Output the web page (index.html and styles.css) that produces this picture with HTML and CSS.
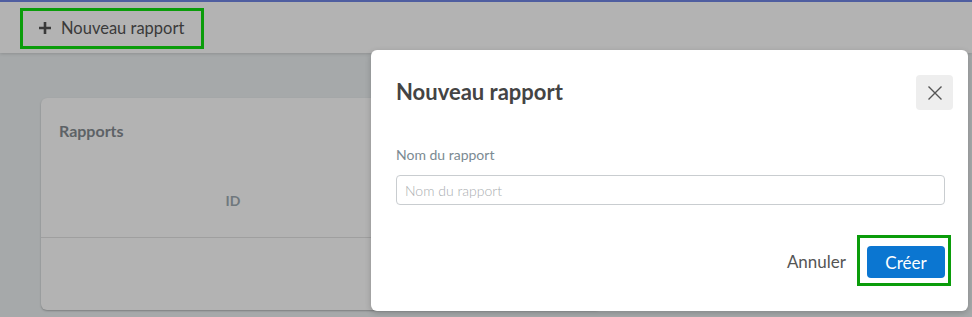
FILE: index.html
```html
<!doctype html>
<html lang="fr">
<head>
    <meta charset="UTF-8">
    <meta name="viewport" content="width=device-width, initial-scale=1.0">
    <title>Rapports</title>
    <link rel="stylesheet" href="styles.css">
</head>
<body>
<div class="topbar">
    <button class="new-btn marked" type="button">
        <svg class="plus" width="14" height="14" viewBox="0 0 14 14">
            <path d="M7 1v12M1 7h12" stroke="currentColor" stroke-width="2.6" fill="none"/>
        </svg>
        <span>Nouveau rapport</span>
    </button>
</div>

<div class="page">
    <div class="card">
        <h2 class="card-title">Rapports</h2>
        <div class="table-head">
            <div class="col">ID</div>
        </div>
        <div class="table-body"></div>
    </div>
</div>

<div class="modal">
    <div class="modal-header">
        <h3 class="modal-title">Nouveau rapport</h3>
        <button class="close-btn" type="button" aria-label="Fermer">
            <svg width="16" height="16" viewBox="0 0 16 16">
                <path d="M1.5 1.5l13 13M14.5 1.5l-13 13" stroke="#555" stroke-width="1.4" fill="none"/>
            </svg>
        </button>
    </div>
    <div class="modal-body">
        <label class="field-label" for="reportName">Nom du rapport</label>
        <input class="field-input" id="reportName" type="text" placeholder="Nom du rapport">
    </div>
    <div class="modal-footer">
        <button class="btn-link" type="button">Annuler</button>
        <div class="marked create-wrap">
            <button class="btn-primary" type="button">Créer</button>
        </div>
    </div>
</div>
</body>
</html>
```

FILE: styles.css
```css
* {
    box-sizing: border-box;
}

body {
    margin: 0;
    font-family: Lato, "Open Sans", sans-serif;
    background: #a6a9aa;
    height: 317px;
    overflow: hidden;
    position: relative;
}

button {
    font-family: inherit;
}

.topbar {
    height: 53px;
    border-top: 2px solid #4f5ea0;
    background: #b3b3b3;
    padding: 6px 0 0 20px;
    box-shadow: 0 1px 3px rgba(0, 0, 0, .15);
    position: relative;
}

.marked {
    border: 3px solid #0a9c0a;
}

.new-btn {
    display: flex;
    align-items: center;
    gap: 9px;
    width: 184px;
    height: 41px;
    padding: 0 0 2px 15px;
    background: transparent;
    color: #3a3a3a;
    font-size: 16.5px;
    cursor: pointer;
}

.new-btn .plus {
    flex: none;
}

.page {
    padding: 45px 0 0 41px;
}

.card {
    width: 560px;
    height: 212px;
    background: #b3b3b3;
    border-radius: 6px;
    box-shadow: 0 1px 2px rgba(0, 0, 0, .25);
    display: flex;
    flex-direction: column;
}

.card-title {
    margin: 0;
    padding: 23px 0 0 18px;
    font-size: 16px;
    line-height: 20px;
    font-weight: 700;
    color: #5d6266;
}

.table-head {
    margin-top: 24px;
    height: 73px;
    border-bottom: 1px solid #9f9f9f;
    display: flex;
}

.table-head .col {
    width: 384px;
    text-align: center;
    line-height: 72px;
    font-size: 14px;
    font-weight: 700;
    color: #6f787d;
}

.table-body {
    flex: 1;
}

.modal {
    position: absolute;
    left: 371px;
    top: 50px;
    width: 597px;
    height: 261px;
    background: #fff;
    border-radius: 6px;
    box-shadow: 0 2px 6px rgba(0, 0, 0, .2);
    display: flex;
    flex-direction: column;
}

.modal-header {
    display: flex;
    align-items: center;
    justify-content: space-between;
    padding: 25px 15px 0 25px;
}

.modal-title {
    margin: 0 0 2px;
    font-size: 22px;
    font-weight: 700;
    color: #444;
}

.close-btn {
    width: 37px;
    height: 35px;
    border: none;
    border-radius: 4px;
    background: #eee;
    display: flex;
    align-items: center;
    justify-content: center;
    padding: 0;
    cursor: pointer;
}

.modal-body {
    padding: 35px 23px 0 25px;
    display: flex;
    flex-direction: column;
}

.field-label {
    font-size: 14px;
    line-height: 20px;
    color: #7b8a92;
    margin-bottom: 10px;
}

.field-input {
    height: 30px;
    border: 1px solid #c9cdd0;
    border-radius: 4px;
    padding: 0 8px;
    font-family: inherit;
    font-size: 14px;
    color: #444;
}

.field-input::placeholder {
    color: #a9adb0;
    font-weight: 300;
}

.modal-footer {
    display: flex;
    justify-content: flex-end;
    align-items: center;
    gap: 11px;
    padding: 30px 17px 0 0;
}

.btn-link {
    border: none;
    background: none;
    font-size: 17px;
    color: #555;
    padding: 0;
    margin-top: 1px;
    cursor: pointer;
}

.create-wrap {
    padding: 8px 3px 5px 7px;
}

.btn-primary {
    display: block;
    width: 78px;
    height: 32px;
    border: none;
    border-radius: 4px;
    background: #0b76d1;
    color: #fff;
    font-size: 17px;
    cursor: pointer;
}
```
